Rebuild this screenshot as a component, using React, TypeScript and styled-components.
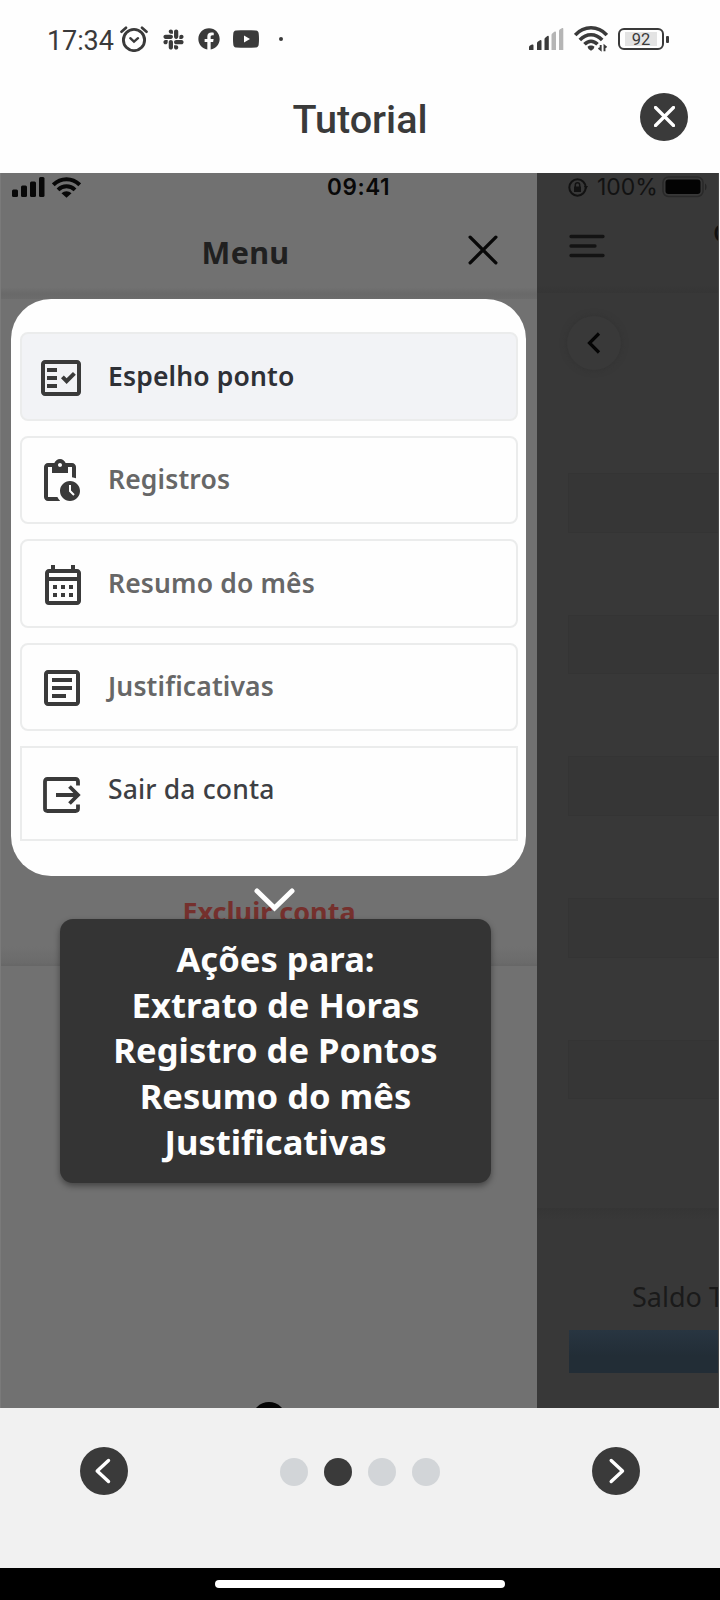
import React from "react";
import styled, { createGlobalStyle } from "styled-components";
import { FaFacebook, FaSlack } from "react-icons/fa";
import {
  MdOutlineArticle,
  MdOutlineCalendarMonth,
  MdOutlineFactCheck,
  MdPendingActions,
} from "react-icons/md";

const GlobalStyle = createGlobalStyle`
  * { box-sizing: border-box; }
  body { margin: 0; background: #fefefe; }
  svg { display: block; flex: none; }
`;

const ink = "#3a3a3a";

const Page = styled.div`
  width: 720px;
  height: 1600px;
  display: flex;
  flex-direction: column;
  overflow: hidden;
  background: #fefefe;
  font-family: "Noto Sans", sans-serif;
`;

const StatusBar = styled.header`
  height: 78px;
  padding: 0 51px 0 47px;
  display: flex;
  align-items: center;
  justify-content: space-between;
  color: ${ink};
`;

const StatusGroup = styled.div<{ $gap: number }>`
  display: flex;
  align-items: center;
  gap: ${(p) => p.$gap}px;
`;

const Clock = styled.span`
  width: 71px;
  font: 400 27px/30px Roboto, sans-serif;
  letter-spacing: -0.1px;
  padding-top: 3px;
`;

const Separator = styled.span`
  width: 4px;
  height: 4px;
  margin-left: 7px;
  border-radius: 50%;
  background: ${ink};
`;

const Battery = styled.div`
  position: relative;
  width: 46px;
  height: 22px;
  margin-right: 5px;
  padding: 2px 5px;
  border: 2px solid ${ink};
  border-radius: 6px;
  &::after {
    content: "";
    position: absolute;
    right: -7px;
    top: 6px;
    width: 3px;
    height: 7px;
    border-radius: 1px;
    background: ${ink};
  }
`;

const BatteryLevel = styled.div`
  height: 14px;
  width: 32px;
  background: #e3e3e3;
  font: 400 16.5px/16px Roboto, sans-serif;
  text-align: center;
`;

const TitleBar = styled.div`
  height: 95px;
  display: grid;
  grid-template-columns: 80px 1fr 80px;
  align-items: center;
  justify-items: center;
  padding-bottom: 18px;
`;

const Title = styled.h1`
  margin: 6px 0 0;
  font: 500 39.6px/48px Roboto, sans-serif;
  color: ${ink};
`;

const RoundButton = styled.button`
  width: 48px;
  height: 48px;
  padding: 0;
  border: 0;
  border-radius: 50%;
  background: ${ink};
  display: grid;
  place-items: center;
`;

const CloseButton = styled(RoundButton)`
  margin-right: 32px;
`;

const Slide = styled.main`
  height: 1235px;
  display: flex;
  overflow: hidden;
  padding-right: 1px;
`;

const Drawer = styled.section`
  position: relative;
  width: 537px;
  flex: none;
  background: #717171;
  border-left: 1px solid #7a7a7a;
  overflow: hidden;
`;

const DrawerStatus = styled.div`
  height: 28px;
  padding: 0 11px;
  display: grid;
  grid-template-columns: 315px 1fr;
  align-items: center;
  font: 600 22.5px/28px Inter, sans-serif;
  letter-spacing: 0.6px;
  color: #080808;
`;

const SignalPair = styled.div`
  display: flex;
  gap: 7px;
  align-items: center;
`;

const DrawerHeader = styled.div`
  height: 98px;
  display: grid;
  grid-template-columns: 1fr 30px;
  align-items: center;
  padding: 0 38px 0 22px;
  background: linear-gradient(#717171 88%, #696969 95%, #6c6c6c);
  color: #202020;
`;

const DrawerTitle = styled.h2`
  margin: 0;
  font: 700 30.5px/40px "Noto Sans", sans-serif;
  letter-spacing: 0.3px;
  padding: 3px 1px 0 0;
  text-align: center;
`;

const CloseDrawer = styled.span`
  margin: -1px 0 0 -1px;
`;

const MenuCard = styled.nav`
  width: 515px;
  height: 577px;
  margin-left: 10px;
  padding: 33px 8px 0 9px;
  display: flex;
  flex-direction: column;
  gap: 15px;
  border-radius: 40px;
  background: #fefefe;
`;

const MenuItem = styled.a<{ $active?: boolean; $square?: boolean; $color: string; $weight: number }>`
  height: ${(p) => (p.$square ? 95 : 88.5)}px;
  display: flex;
  align-items: center;
  border: 2px solid #ebecec;
  border-radius: ${(p) => (p.$square ? 0 : 8)}px;
  background: ${(p) => (p.$active ? "#f2f3f6" : "#fefefe")};
  color: ${(p) => p.$color};
  font-size: 26.5px;
  letter-spacing: 0.15px;
  line-height: 36px;
  font-weight: ${(p) => p.$weight};
`;

const ItemIcon = styled.span<{ $left: number }>`
  width: ${(p) => 86 - p.$left}px;
  margin-left: ${(p) => p.$left}px;
  padding-top: 3px;
  color: ${ink};
`;

const ItemLabel = styled.span<{ $lift: number }>`
  padding-bottom: ${(p) => p.$lift}px;
`;

const DeleteAccount = styled.a`
  display: block;
  height: 90px;
  padding: 18px 0 0;
  text-align: center;
  font-size: 27px;
  line-height: 36px;
  font-weight: 700;
  color: #75302d;
  background: linear-gradient(#717171 78%, #6b6b6b 96%, #666);
`;

const Callout = styled.div`
  position: absolute;
  left: 59px;
  top: 746px;
  width: 431px;
  height: 264px;
  padding-top: 17px;
  border-radius: 13px;
  background: #343434;
  box-shadow: 0 3px 6px rgba(0, 0, 0, 0.4);
  color: #fefefe;
  text-align: center;
  font-weight: 700;
  font-size: 34.6px;
  line-height: 45.7px;
`;

const CalloutLine = styled.div``;

const CalloutArrow = styled.svg`
  position: absolute;
  left: 253px;
  top: 715px;
`;

const HomeKnob = styled.span`
  position: absolute;
  left: 251px;
  top: 1229px;
  width: 34px;
  height: 34px;
  border-radius: 50%;
  background: #050505;
`;

const Backdrop = styled.section`
  width: 182px;
  flex: none;
  overflow: hidden;
  background: #383838;
  border-right: 1px solid #484848;
  color: #171717;
`;

const BackdropStatus = styled.div`
  height: 28px;
  padding-left: 31px;
  display: flex;
  align-items: center;
  font: 400 23px/28px Inter, sans-serif;
  color: #121212;
`;

const Percent = styled.span`
  width: 65px;
  margin-left: 9px;
  white-space: nowrap;
`;

const BackdropHeader = styled.div`
  height: 92px;
  padding: 0 0 2px 32px;
  display: flex;
  align-items: center;
  gap: 107px;
  background: linear-gradient(#383838 92%, #353535);
  white-space: nowrap;
`;

const BackdropTitle = styled.span`
  font-size: 26px;
  font-weight: 500;
  color: #101010;
  padding: 0 0 28px 1px;
`;

const BackCircle = styled.div`
  width: 54px;
  height: 54px;
  margin: 23px 0 0 30px;
  border-radius: 50%;
  display: grid;
  place-items: center;
  background: #393939;
  box-shadow: 0 0 6px #323232;
`;

const RowList = styled.div`
  margin: 103px 0 0 31px;
  display: flex;
  flex-direction: column;
  gap: 82px;
`;

const GhostRow = styled.div`
  height: 59.7px;
  border: 1px solid #343434;
  border-right: 0;
  background: #363636;
`;

const Summary = styled.div`
  height: 200px;
  margin-top: 109px;
  padding: 71px 0 0 32px;
  background: linear-gradient(#353535, #383838 12px);
`;

const SummaryLabel = styled.div`
  padding-left: 63px;
  font-size: 27px;
  line-height: 36px;
  white-space: nowrap;
  color: #1a1a1a;
`;

const SummaryBar = styled.div`
  height: 43px;
  margin-top: 15px;
  background: linear-gradient(#283541, #222d36 60%);
`;

const Pager = styled.footer`
  height: 160px;
  padding: 39px 80px 0;
  display: flex;
  justify-content: space-between;
  align-items: flex-start;
  background: #f1f1f1;
`;

const Dots = styled.div`
  display: flex;
  gap: 16px;
  padding-top: 11px;
`;

const Dot = styled.span<{ $current?: boolean }>`
  width: 28px;
  height: 28px;
  border-radius: 50%;
  background: ${(p) => (p.$current ? ink : "#d2d5d8")};
`;

const HomeBar = styled.div`
  height: 32px;
  display: flex;
  justify-content: center;
  padding-top: 12px;
  background: #000;
`;

const HomeIndicator = styled.span`
  width: 290px;
  height: 8px;
  border-radius: 4px;
  background: #fff;
`;

const AlarmIcon = () => (
  <svg width="28" height="26" viewBox="0 0 28 26" fill="none" stroke={ink} strokeLinecap="round">
    <circle cx="14" cy="14" r="10.6" strokeWidth="2.9" />
    <path d="M1.5 5.7 6 1.8M26.5 5.7 22 1.8" strokeWidth="2.7" />
    <path d="m10.3 12.2 3.7 3.4 4-3.4" strokeWidth="2.4" />
  </svg>
);

const YoutubeIcon = () => (
  <svg width="26" height="18" viewBox="0 0 26 18">
    <path
      d="M3 .6C9 0 17 0 23 .6c1.8.3 2.5 1.3 2.7 3 .4 3.5.4 7.3 0 10.8-.2 1.8-1 2.7-2.7 3-6 .6-14 .6-20 0-1.8-.3-2.5-1.3-2.7-3-.4-3.5-.4-7.3 0-10.800C.5 1.900 1.200.9 3 .6Z"
      fill={ink}
    />
    <path d="m11 5.500 6 3.500-6 3.500Z" fill="#fefefe" />
  </svg>
);

const CellIcon = () => (
  <svg width="35" height="22" viewBox="0 0 35 22" fill={ink}>
    <path d="M0 22v-3q0-1 1-1.500l2-1q1.500-.5 1.500 1V22ZM8 22v-7q0-1 1-1.500l2-1.300q1.500-.6 1.500 1V22ZM15.500 22V11q0-1 1-1.500l1.800-1.500q1.500-.8 1.500 1V22Z" />
    <path d="M22.500 22V7q0-1 1-1.800l1.800-1.500Q27 3 27 4.500V22ZM30 22V3q0-1 1-1.800l1.800-1Q34.300-.5 34.300 1V22Z" fill="#b5b5b5" />
  </svg>
);

const WifiIcon = () => (
  <svg width="34" height="26" viewBox="0 0 34 26" fill="none" stroke={ink} strokeWidth="3.6">
    <path d="M1.200 9C10-.6 24-.6 32.800 9M5.800 14C12.500 7 21.500 7 28.200 14M10.500 18.300c4-4 9-4 13 0" />
    <path d="m13.500 20.800c1.800-1.800 5.200-1.800 7 0q0 2-3.500 4-3.500-2-3.500-4Z" fill={ink} stroke="none" />
    <path d="m24.500 22 2.200 1.800v-4.800M32.500 21.500l-2-1.700v5.500" strokeWidth="1.900" />
  </svg>
);

const DrawerSignalIcon = () => (
  <svg width="33" height="20" viewBox="0 0 33 20" fill="#080808">
    <rect y="12.500" width="6" height="7.500" rx="1.500" />
    <rect x="9" y="8.500" width="6" height="11.500" rx="1.500" />
    <rect x="18" y="4.500" width="6" height="15.500" rx="1.500" />
    <rect x="27" width="5.500" height="20" rx="1.500" />
  </svg>
);

const DrawerWifiIcon = () => (
  <svg width="29" height="21" viewBox="0 0 29 21" fill="none" stroke="#080808" strokeWidth="3.900">
    <path d="M1.300 7.800c7.500-7.500 18.900-7.500 26.400 0M6 12.800c5-4.800 12-4.800 17 0" />
    <path d="M9.500 16.300c2.800-2.800 7.200-2.800 10 0l-5 4.500Z" fill="#080808" stroke="none" />
  </svg>
);

const CrossIcon = ({ size, color, width }: { size: number; color: string; width: number }) => (
  <svg width={size} height={size} viewBox="0 0 28 28" stroke={color} strokeWidth={width} strokeLinecap="round">
    <path d="M2 2l24 24M26 2 2 26" />
  </svg>
);

const ChevronIcon = ({ right = false }: { right?: boolean }) => (
  <svg width="48" height="48" viewBox="0 0 48 48" fill="none" stroke="#fff" strokeWidth="3.400" strokeLinecap="round" strokeLinejoin="round">
    <path d={right ? "m19.200 13.500 11.300 10.500-11.300 10.500" : "M28.500 13.500 17.200 24l11.300 10.500"} />
  </svg>
);

const ExitIcon = () => (
  <svg width="40" height="36" viewBox="0 0 40 36" fill="none" stroke={ink} strokeWidth="3.800">
    <path d="M35 8.500V4.500q0-2.500-2.500-2.500H4.500Q2 2 2 4.500v27Q2 34 4.500 34h28q2.500 0 2.500-2.500v-4" />
    <path d="M13 18h22M26.500 9.500 35 18l-8.500 8.500" />
  </svg>
);

const LockIcon = () => (
  <svg width="20" height="19" viewBox="0 0 20 19" fill="none" stroke="#121212">
    <circle cx="9.500" cy="9.500" r="8.200" strokeWidth="2" />
    <path d="M7.300 9V7a2.200 2.200 0 0 1 4.400 0v2" strokeWidth="1.500" />
    <path d="M6 8.500h7v5.500H6ZM16 8h4l-2 3.500Z" fill="#121212" stroke="none" />
  </svg>
);

const FullBatteryIcon = () => (
  <svg width="46" height="22" viewBox="0 0 46 22">
    <rect x="1" y="1" width="40" height="19.500" rx="5.500" fill="none" stroke="#292929" strokeWidth="1.500" />
    <rect x="3.500" y="3.500" width="35" height="14.500" rx="3" fill="#030303" />
    <path d="M43 7.500c2 .8 2 6 0 6.800Z" fill="#252525" />
  </svg>
);

const BurgerIcon = () => (
  <svg width="36" height="24" viewBox="0 0 36 24" stroke="#131313" strokeWidth="3.300" strokeLinecap="round">
    <path d="M2 2.500h32M2 12h24M2 21.500h32" />
  </svg>
);

const menuItems = [
  { label: "Espelho ponto", Icon: MdOutlineFactCheck, left: 15, color: "#2e3036", weight: 600, lift: 0, active: true },
  { label: "Registros", Icon: MdPendingActions, left: 14, color: "#676767", weight: 600, lift: 2 },
  { label: "Resumo do mês", Icon: MdOutlineCalendarMonth, left: 17, color: "#676767", weight: 600, lift: 0 },
  { label: "Justificativas", Icon: MdOutlineArticle, left: 16, color: "#676767", weight: 600, lift: 2 },
];

const calloutLines = ["Ações para:", "Extrato de Horas", "Registro de Pontos", "Resumo do mês", "Justificativas"];

export default function App() {
  return (
    <Page>
      <GlobalStyle />
      <StatusBar>
        <StatusGroup $gap={14}>
          <StatusGroup $gap={2}>
            <Clock>17:34</Clock>
            <AlarmIcon />
          </StatusGroup>
          <StatusGroup $gap={13}>
            <FaSlack size={23} />
            <FaFacebook size={22} />
            <YoutubeIcon />
            <Separator />
          </StatusGroup>
        </StatusGroup>
        <StatusGroup $gap={10}>
          <CellIcon />
          <WifiIcon />
          <Battery>
            <BatteryLevel>92</BatteryLevel>
          </Battery>
        </StatusGroup>
      </StatusBar>
      <TitleBar>
        <span />
        <Title>Tutorial</Title>
        <CloseButton aria-label="Fechar">
          <CrossIcon size={21} color="#fff" width={4.4} />
        </CloseButton>
      </TitleBar>
      <Slide>
        <Drawer>
          <DrawerStatus>
            <SignalPair>
              <DrawerSignalIcon />
              <DrawerWifiIcon />
            </SignalPair>
            <span>09:41</span>
          </DrawerStatus>
          <DrawerHeader>
            <DrawerTitle>Menu</DrawerTitle>
            <CloseDrawer>
              <CrossIcon size={30} color="#080808" width={3.1} />
            </CloseDrawer>
          </DrawerHeader>
          <MenuCard>
            {menuItems.map(({ label, Icon, left, color, weight, lift, active }) => (
              <MenuItem key={label} $active={active} $color={color} $weight={weight}>
                <ItemIcon $left={left}>
                  <Icon size={48} />
                </ItemIcon>
                <ItemLabel $lift={lift}>{label}</ItemLabel>
              </MenuItem>
            ))}
            <MenuItem $square $color="#3d3f44" $weight={500}>
              <ItemIcon $left={21}>
                <ExitIcon />
              </ItemIcon>
              <ItemLabel $lift={9}>Sair da conta</ItemLabel>
            </MenuItem>
          </MenuCard>
          <DeleteAccount>Excluir conta</DeleteAccount>
          <Callout>
            {calloutLines.map((line) => (
              <CalloutLine key={line}>{line}</CalloutLine>
            ))}
          </Callout>
          <CalloutArrow width="41" height="24" viewBox="0 0 41 24" fill="none" stroke="#fefefe" strokeWidth="5" strokeLinecap="round">
            <path d="m3 3 17.500 17L38 3" />
          </CalloutArrow>
          <HomeKnob />
        </Drawer>
        <Backdrop>
          <BackdropStatus>
            <LockIcon />
            <Percent>100%</Percent>
            <FullBatteryIcon />
          </BackdropStatus>
          <BackdropHeader>
            <BurgerIcon />
            <BackdropTitle>C</BackdropTitle>
          </BackdropHeader>
          <BackCircle>
            <svg width="14" height="22" viewBox="0 0 14 22" fill="none" stroke="#050505" strokeWidth="3.200">
              <path d="M12 1.500 2.500 11l9.500 9.500" />
            </svg>
          </BackCircle>
          <RowList>
            {[0, 1, 2, 3, 4].map((row) => (
              <GhostRow key={row} />
            ))}
          </RowList>
          <Summary>
            <SummaryLabel>Saldo T</SummaryLabel>
            <SummaryBar />
          </Summary>
        </Backdrop>
      </Slide>
      <Pager>
        <RoundButton aria-label="Anterior">
          <ChevronIcon />
        </RoundButton>
        <Dots>
          <Dot />
          <Dot $current />
          <Dot />
          <Dot />
        </Dots>
        <RoundButton aria-label="Próximo">
          <ChevronIcon right />
        </RoundButton>
      </Pager>
      <HomeBar>
        <HomeIndicator />
      </HomeBar>
    </Page>
  );
}
